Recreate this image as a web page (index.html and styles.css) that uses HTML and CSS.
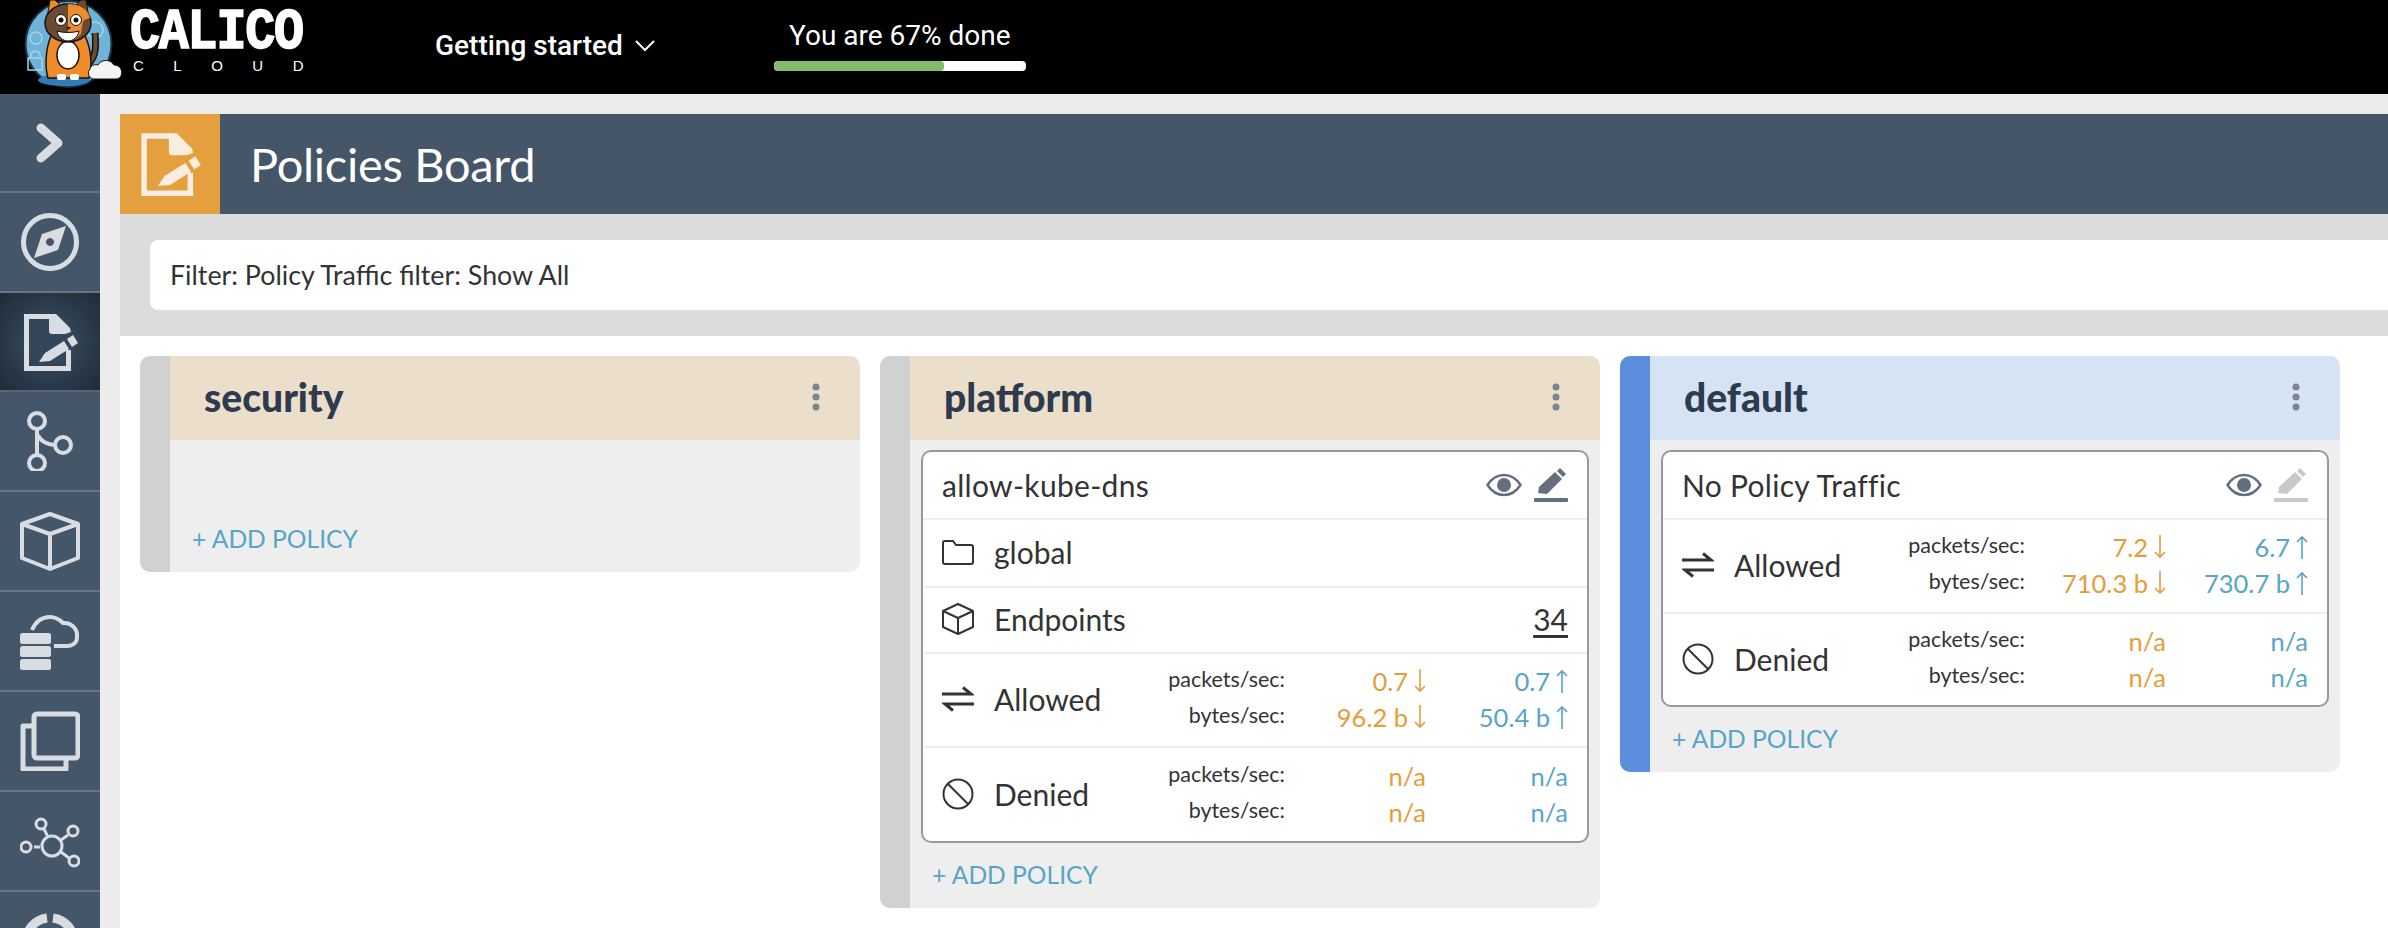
FILE: index.html
```html
<!DOCTYPE html>
<html>
  <head>
    <title>Policies Board</title>
    <link rel="stylesheet" href="styles.css">
  </head>
  <body>
    <svg class="defs" width="0" height="0">
      <symbol id="policy-icon" viewBox="0 0 60 60">
        <path d="M33 4.5H6.5V56.5H48.5V38" fill="none" stroke="currentColor" stroke-width="5"/>
        <path d="M29 2h7l14 14 1 4-6 2H32a3 3 0 0 1-3-3z" fill="currentColor"/>
        <path d="M19 50l6-9 19-12 5 8-19 12z" fill="currentColor"/>
        <path d="M47 27l6-4 5 8-6 4z" fill="currentColor"/>
      </symbol>
      <symbol id="eye" viewBox="0 0 36 24">
        <path d="M1.5 12C6 5 11 2 18 2s12 3 16.500 10C30 19 25 22 18 22S6 19 1.500 12z" fill="none" stroke="currentColor" stroke-width="2.500"/>
        <circle cx="18" cy="12" r="7" fill="currentColor"/>
      </symbol>
      <symbol id="pencil" viewBox="0 0 34 34">
        <path d="M4 25l1-6L21 4l7 7-15 15z" fill="currentColor"/>
        <path d="M23 3l3-3 6 6-3 3z" fill="currentColor"/>
        <rect x="0" y="30" width="34" height="4" rx="1" fill="currentColor"/>
      </symbol>
      <symbol id="dots" viewBox="0 0 8 28">
        <circle cx="4" cy="4" r="3.500"/><circle cx="4" cy="14" r="3.500"/><circle cx="4" cy="24" r="3.500"/>
      </symbol>
      <symbol id="swap" viewBox="0 0 32 26">
        <path d="M0 8H27M21 1.500L29 8H20M32 18H5M11 24.500L3 18H12" fill="none" stroke="currentColor" stroke-width="3"/>
      </symbol>
      <symbol id="deny" viewBox="0 0 32 32">
        <circle cx="16" cy="16" r="14.500" fill="none" stroke="currentColor" stroke-width="2"/>
        <path d="M6 6L26 26" stroke="currentColor" stroke-width="2"/>
      </symbol>
      <symbol id="down" viewBox="0 0 12 24">
        <path d="M6 0V22M1 17l5 5 5-5" fill="none" stroke="currentColor" stroke-width="1.600"/>
      </symbol>
      <symbol id="up" viewBox="0 0 12 24">
        <path d="M6 24V2M1 7l5-5 5 5" fill="none" stroke="currentColor" stroke-width="1.600"/>
      </symbol>
    </svg>

    <header class="topbar">
      <svg class="logo-cat" viewBox="0 0 110 94" width="110" height="94">
        <circle cx="48.500" cy="44" r="43" fill="#6fb3d8" stroke="#1d3442" stroke-width="2"/>
        <ellipse cx="44" cy="80" rx="26" ry="6" fill="#2f7cb8"/>
        <g fill="none" stroke="#a9d3e8" stroke-width="1.500">
          <circle cx="16" cy="38" r="6"/>
          <rect x="8" y="58" width="14" height="12"/>
          <path d="M11 58v-4a5 5 0 0 1 9 0v4"/>
          <circle cx="75" cy="30" r="8"/>
        </g>
        <path d="M66 66c8-6 11-14 9-33" fill="none" stroke="#17120e" stroke-width="7"/>
        <path d="M66 66c8-6 11-14 9-33" fill="none" stroke="#6a4a33" stroke-width="4"/>
        <path d="M31 36h34c7 14 7 32 4 42H28c-3-10-3-28 3-42z" fill="#ee8b2a" stroke="#17120e" stroke-width="1.500"/>
        <ellipse cx="48" cy="55" rx="11" ry="14" fill="#fff" stroke="#17120e" stroke-width="1.500"/>
        <rect x="37" y="74" width="9" height="6" rx="2" fill="#fff"/>
        <rect x="50" y="74" width="9" height="6" rx="2" fill="#fff"/>
        <path d="M27 18L30 0h5l8 8z" fill="#ee8b2a" stroke="#17120e"/>
        <path d="M69 18L66 0h-5l-8 8z" fill="#6a4a33" stroke="#17120e"/>
        <ellipse cx="48" cy="23" rx="23" ry="19" fill="#6a4a33" stroke="#17120e" stroke-width="1.500"/>
        <path d="M48 4c12 0 20 5 22 14l-6 2c-3 6-2 12-3 14-4 4-9 7-13 7z" fill="#ee8b2a"/>
        <circle cx="41" cy="20" r="5.500" fill="#fff" stroke="#17120e"/>
        <circle cx="56" cy="20" r="5.500" fill="#fff" stroke="#17120e"/>
        <circle cx="41" cy="20" r="2.500" fill="#17120e"/>
        <circle cx="56" cy="20" r="2.500" fill="#17120e"/>
        <path d="M37 31c6 2 16 2 22 0-1 6-6 10-11 10s-10-4-11-10z" fill="#fff" stroke="#17120e"/>
        <path d="M46 27h5l-2.500 3z" fill="#17120e"/>
        <path d="M73 79a6 6 0 0 1-3-10c1-4 5-5 8-4 2-5 12-7 16 0 6 0 9 5 7 11-1 2-3 3-5 3z" fill="#f4f4f4" stroke="#17120e" stroke-width="1"/>
      </svg>
      <div class="wordmark">
        <span class="wordmark-name">CALICO</span>
        <span class="wordmark-sub">CLOUD</span>
      </div>
      <div class="guide-menu">
        <span>Getting started</span>
        <svg viewBox="0 0 20 12" width="20" height="12"><path d="M1 1l9 9 9-9" fill="none" stroke="#fff" stroke-width="2"/></svg>
      </div>
      <div class="progress">
        <div class="progress-label">You are 67% done</div>
        <div class="progress-track"><div class="progress-fill"></div></div>
      </div>
    </header>

    <div class="app">
      <nav class="sidebar">
        <a class="side-item side-first">
          <svg viewBox="0 0 60 60" width="60" height="60"><path d="M21 15l17 15-17 15" fill="none" stroke="currentColor" stroke-width="9" stroke-linejoin="round" stroke-linecap="round"/></svg>
        </a>
        <a class="side-item">
          <svg viewBox="0 0 60 60" width="60" height="60">
            <circle cx="30" cy="30" r="26.500" fill="none" stroke="currentColor" stroke-width="5"/>
            <path d="M46 14L38 38 14 46l8-24zM30 26a4 4 0 1 0 .01 0z" fill="currentColor" fill-rule="evenodd"/>
          </svg>
        </a>
        <a class="side-item side-active">
          <svg width="60" height="60"><use href="#policy-icon"/></svg>
        </a>
        <a class="side-item">
          <svg viewBox="0 0 60 60" width="60" height="60" fill="none" stroke="currentColor" stroke-width="4">
            <circle cx="17" cy="10" r="8"/><circle cx="17" cy="52" r="8"/><circle cx="43" cy="34" r="8"/>
            <path d="M17 18V44M18 24c2 6 10 10 17 10"/>
          </svg>
        </a>
        <a class="side-item">
          <svg viewBox="0 0 60 60" width="60" height="60" fill="none" stroke="currentColor" stroke-width="4" stroke-linejoin="round">
            <path d="M30 3L58 13V47L30 58 2 47V13zM2 13L30 23 58 13M30 23V58"/>
          </svg>
        </a>
        <a class="side-item">
          <svg viewBox="0 0 60 60" width="60" height="60">
            <path d="M12 19C15 12 20 6 30 6c6 0 9 2 13 6 8-1 15 6 14 14 0 7-6 9-10 9H34" fill="none" stroke="currentColor" stroke-width="4"/>
            <rect x="0" y="22" width="31" height="11" rx="2.500" fill="currentColor"/>
            <rect x="0" y="35" width="31" height="11" rx="2.500" fill="currentColor"/>
            <rect x="0" y="48" width="31" height="11" rx="2.500" fill="currentColor"/>
          </svg>
        </a>
        <a class="side-item">
          <svg viewBox="0 0 60 60" width="60" height="60" fill="none" stroke="currentColor" stroke-width="5" stroke-linejoin="round">
            <rect x="14" y="3" width="44" height="44" rx="3"/>
            <path d="M13 15H3V58H46V48"/>
          </svg>
        </a>
        <a class="side-item">
          <svg viewBox="0 0 60 60" width="60" height="60" fill="none" stroke="currentColor" stroke-width="3">
            <circle cx="32" cy="35" r="10"/><circle cx="21" cy="13" r="5"/><circle cx="53" cy="20" r="5"/><circle cx="6" cy="36" r="5"/><circle cx="54" cy="50" r="5"/>
            <path d="M24 18l4 8M41 29l7-5M14 36h6M41 41l8 6"/>
          </svg>
        </a>
        <a class="side-item">
          <svg viewBox="0 0 60 60" width="60" height="60" fill="none" stroke="currentColor" stroke-width="9">
            <path d="M27 7A24 24 0 0 0 6 30M33 7A24 24 0 0 1 54 30"/>
          </svg>
        </a>
      </nav>

      <main class="main">
        <div class="title-bar">
          <div class="title-icon"><svg width="66" height="66"><use href="#policy-icon"/></svg></div>
          <h1 class="title-text">Policies Board</h1>
        </div>
        <div class="filter-wrap">
          <div class="filter-box">Filter: Policy Traffic filter: Show All</div>
        </div>

        <div class="board">
          <section class="tier">
            <div class="tier-stripe"></div>
            <div class="tier-body">
              <div class="tier-head">
                <h2>security</h2>
                <svg class="tier-dots" width="8" height="28"><use href="#dots"/></svg>
              </div>
              <div class="tier-empty"></div>
              <div class="add-policy">+ ADD POLICY</div>
            </div>
          </section>

          <section class="tier">
            <div class="tier-stripe"></div>
            <div class="tier-body">
              <div class="tier-head">
                <h2>platform</h2>
                <svg class="tier-dots" width="8" height="28"><use href="#dots"/></svg>
              </div>
              <div class="card">
                <div class="row row-title">
                  <span>allow-kube-dns</span>
                  <span class="row-actions">
                    <svg class="act" width="36" height="24"><use href="#eye"/></svg>
                    <svg class="act" width="34" height="34"><use href="#pencil"/></svg>
                  </span>
                </div>
                <div class="row row-info">
                  <svg class="row-icon" viewBox="0 0 32 26" width="32" height="26"><path d="M1 4a2 2 0 0 1 2-2h8l3 4h15a2 2 0 0 1 2 2v15a2 2 0 0 1-2 2H3a2 2 0 0 1-2-2z" fill="none" stroke="#333" stroke-width="2"/></svg>
                  <span>global</span>
                </div>
                <div class="row row-info row-endpoints">
                  <svg class="row-icon" viewBox="0 0 32 32" width="32" height="32"><path d="M16 1l15 7v16l-15 7-15-7V8zM1 8l15 7 15-7M16 15v16" fill="none" stroke="#333" stroke-width="2" stroke-linejoin="round"/></svg>
                  <span>Endpoints</span>
                  <a class="endpoints-count">34</a>
                </div>
                <div class="row row-traffic">
                  <svg class="row-icon" width="32" height="26"><use href="#swap"/></svg>
                  <span class="traffic-name">Allowed</span>
                  <div class="traffic">
                    <span class="rate-label">packets/sec:</span>
                    <span class="rate in">0.7<svg class="arrow" width="12" height="24"><use href="#down"/></svg></span>
                    <span class="rate out">0.7<svg class="arrow" width="12" height="24"><use href="#up"/></svg></span>
                    <span class="rate-label">bytes/sec:</span>
                    <span class="rate in">96.2 b<svg class="arrow" width="12" height="24"><use href="#down"/></svg></span>
                    <span class="rate out">50.4 b<svg class="arrow" width="12" height="24"><use href="#up"/></svg></span>
                  </div>
                </div>
                <div class="row row-traffic">
                  <svg class="row-icon" width="32" height="32"><use href="#deny"/></svg>
                  <span class="traffic-name">Denied</span>
                  <div class="traffic">
                    <span class="rate-label">packets/sec:</span>
                    <span class="rate in">n/a</span>
                    <span class="rate out">n/a</span>
                    <span class="rate-label">bytes/sec:</span>
                    <span class="rate in">n/a</span>
                    <span class="rate out">n/a</span>
                  </div>
                </div>
              </div>
              <div class="add-policy">+ ADD POLICY</div>
            </div>
          </section>

          <section class="tier tier-default">
            <div class="tier-stripe"></div>
            <div class="tier-body">
              <div class="tier-head">
                <h2>default</h2>
                <svg class="tier-dots" width="8" height="28"><use href="#dots"/></svg>
              </div>
              <div class="card">
                <div class="row row-title">
                  <span>No Policy Traffic</span>
                  <span class="row-actions">
                    <svg class="act" width="36" height="24"><use href="#eye"/></svg>
                    <svg class="act act-off" width="34" height="34"><use href="#pencil"/></svg>
                  </span>
                </div>
                <div class="row row-traffic">
                  <svg class="row-icon" width="32" height="26"><use href="#swap"/></svg>
                  <span class="traffic-name">Allowed</span>
                  <div class="traffic">
                    <span class="rate-label">packets/sec:</span>
                    <span class="rate in">7.2<svg class="arrow" width="12" height="24"><use href="#down"/></svg></span>
                    <span class="rate out">6.7<svg class="arrow" width="12" height="24"><use href="#up"/></svg></span>
                    <span class="rate-label">bytes/sec:</span>
                    <span class="rate in">710.3 b<svg class="arrow" width="12" height="24"><use href="#down"/></svg></span>
                    <span class="rate out">730.7 b<svg class="arrow" width="12" height="24"><use href="#up"/></svg></span>
                  </div>
                </div>
                <div class="row row-traffic">
                  <svg class="row-icon" width="32" height="32"><use href="#deny"/></svg>
                  <span class="traffic-name">Denied</span>
                  <div class="traffic">
                    <span class="rate-label">packets/sec:</span>
                    <span class="rate in">n/a</span>
                    <span class="rate out">n/a</span>
                    <span class="rate-label">bytes/sec:</span>
                    <span class="rate in">n/a</span>
                    <span class="rate out">n/a</span>
                  </div>
                </div>
              </div>
              <div class="add-policy">+ ADD POLICY</div>
            </div>
          </section>
        </div>
      </main>
    </div>
  </body>
</html>
```

FILE: styles.css
```css
* {
  box-sizing: border-box;
}

html,
body {
  height: 100%;
  margin: 0;
  overflow: hidden;
}

body {
  font-family: Lato, "Open Sans", sans-serif;
  color: #333;
  background: #ececec;
  display: flex;
  flex-direction: column;
}

.defs {
  position: absolute;
}

/* top bar */
.topbar {
  height: 94px;
  flex: none;
  background: #000;
  color: #fff;
  display: flex;
  align-items: center;
  padding-left: 20px;
  font-family: Roboto, sans-serif;
}

.wordmark {
  width: 200px;
  display: flex;
  flex-direction: column;
  padding-bottom: 9px;
}

.wordmark-name {
  font-family: "Liberation Mono", monospace;
  font-weight: 700;
  font-size: 50px;
  line-height: 44px;
  letter-spacing: -1.200px;
  -webkit-text-stroke: 1.500px #fff;
  transform: scaleY(1.150);
}

.wordmark-sub {
  font-family: "Liberation Sans", sans-serif;
  font-size: 15px;
  line-height: 16px;
  letter-spacing: 29.500px;
  padding-left: 3px;
  margin-top: 3px;
}

.guide-menu {
  margin-left: 105px;
  margin-top: -3px;
  display: flex;
  align-items: center;
  gap: 12px;
  font-size: 28px;
  font-weight: 500;
}

.progress {
  margin-left: 119px;
  width: 252px;
  margin-top: -4px;
}

.progress-label {
  text-align: center;
  font-size: 28px;
  line-height: 32px;
  margin-bottom: 9px;
}

.progress-track {
  height: 10px;
  background: #fff;
  border-radius: 4px;
  overflow: hidden;
}

.progress-fill {
  width: 170px;
  height: 100%;
  background: #85b96c;
  border-radius: 4px;
}

/* sidebar */
.app {
  flex: 1;
  display: flex;
  min-height: 0;
  overflow: hidden;
}

.sidebar {
  width: 100px;
  flex: none;
  background: #44566a;
  color: #d9dde2;
  display: flex;
  flex-direction: column;
  overflow: hidden;
}

.side-item {
  height: 100px;
  flex: none;
  display: flex;
  align-items: center;
  justify-content: center;
  border-bottom: 2px solid #66768a;
}

.side-first {
  height: 99px;
}

.side-active {
  height: 99px;
  background: radial-gradient(circle, #34465a 30%, #1e2a37 100%);
  border-bottom-color: #55657a;
}

/* page */
.main {
  flex: 1;
  min-width: 0;
  padding: 20px 0 0 20px;
  display: flex;
  flex-direction: column;
  overflow: hidden;
}

.title-bar {
  height: 100px;
  flex: none;
  background: #465669;
  color: #fff;
  display: flex;
  align-items: center;
}

.title-icon {
  width: 100px;
  height: 100px;
  background: #e59f3f;
  color: #f8eee0;
  display: flex;
  align-items: center;
  justify-content: center;
}

.title-text {
  margin: 0 0 0 30px;
  font-size: 47px;
  font-weight: 400;
  letter-spacing: -0.300px;
}

.filter-wrap {
  flex: none;
  background: #dcdcdc;
  padding: 26px 0 26px 30px;
}

.filter-box {
  height: 70px;
  background: #fff;
  border-radius: 8px 0 0 8px;
  padding-left: 20px;
  display: flex;
  align-items: center;
  font-size: 26.800px;
}

.board {
  flex: 1;
  background: #fff;
  display: flex;
  align-items: flex-start;
  gap: 20px;
  padding: 20px 20px 0;
}

/* tiers */
.tier {
  width: 720px;
  flex: none;
  display: flex;
  border-radius: 10px;
  overflow: hidden;
  background: #eee;
}

.tier-stripe {
  width: 30px;
  flex: none;
  background: #d1d1d1;
}

.tier-default .tier-stripe {
  background: #5b8edd;
}

.tier-body {
  flex: 1;
  min-width: 0;
}

.tier-head {
  height: 84px;
  background: #ebdfcb;
  display: flex;
  align-items: center;
  justify-content: space-between;
  padding: 0 40px 2px 34px;
}

.tier-default .tier-head {
  background: #d6e3f4;
}

.tier-head h2 {
  margin: 0;
  font-size: 39px;
  font-weight: 900;
  color: #2e3b4e;
}

.tier-dots {
  fill: #7a8591;
}

.tier-empty {
  height: 67px;
}

.add-policy {
  height: 65px;
  display: flex;
  align-items: center;
  padding: 0 0 2px 22px;
  font-size: 24.600px;
  color: #56a5c8;
}

/* policy card */
.card {
  margin: 10px 11px 0;
  background: #fff;
  border: 2px solid #999;
  border-radius: 10px;
}

.row {
  display: flex;
  align-items: center;
  padding: 0 19px 2px;
  border-bottom: 2px solid #eee;
  font-size: 30px;
}

.row:last-child {
  border-bottom: none;
}

.row-title {
  height: 68px;
  padding-bottom: 0;
  justify-content: space-between;
  letter-spacing: 0.300px;
}

.row-actions {
  display: flex;
  align-items: center;
  gap: 12px;
  color: #636f7f;
}

.act-off {
  color: #c9c9c9;
}

.row-info {
  height: 68px;
}

.row-endpoints {
  height: 66px;
}

.row-icon {
  width: 32px;
  flex: none;
  margin-right: 20px;
  color: #333;
}

.endpoints-count {
  margin-left: auto;
  text-decoration: underline;
  text-underline-offset: 4px;
}

.row-traffic {
  height: 94px;
}

.row-traffic:last-child {
  height: 93px;
}

.tier-default .row-traffic:last-child {
  height: 91px;
}

.traffic-name {
  flex: 1;
}

.traffic {
  display: grid;
  grid-template-columns: auto 141px 142px;
  grid-auto-rows: 36px;
  align-items: center;
}

.rate-label {
  text-align: right;
  font-size: 21.500px;
  margin-bottom: 4px;
}

.rate {
  display: flex;
  align-items: center;
  justify-content: flex-end;
  gap: 6px;
  font-size: 25.500px;
}

.rate.in {
  color: #e59d39;
}

.rate.out {
  color: #56a5c8;
}
```
